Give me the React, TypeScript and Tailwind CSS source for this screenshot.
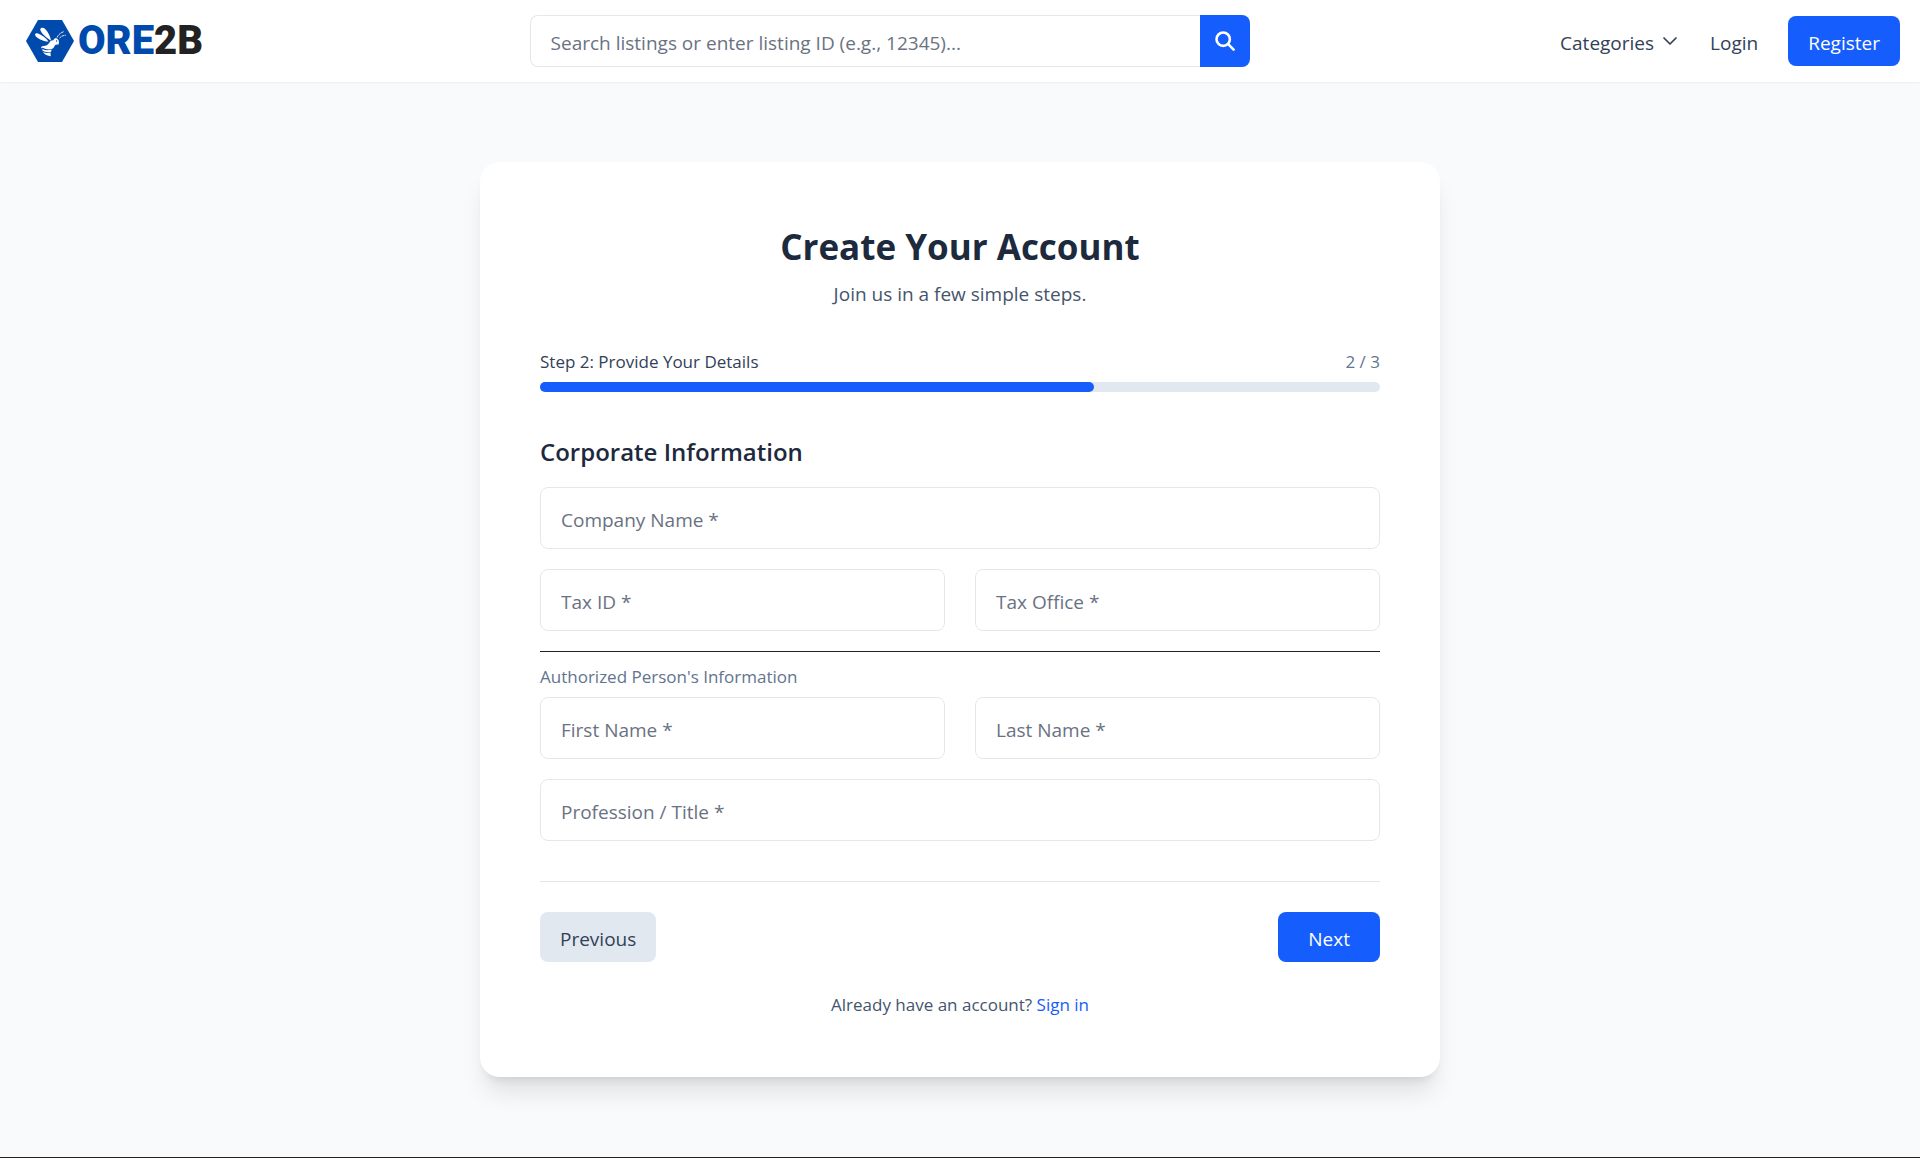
import { useState } from 'react';
import type { FormEvent } from 'react';

interface FieldProps {
  name: string;
  placeholder: string;
}

function Field({ name, placeholder }: FieldProps) {
  return (
    <input
      type="text"
      name={name}
      aria-label={placeholder}
      placeholder={placeholder}
      required
      className="block h-[62px] w-full min-w-0 rounded-lg border border-gray-200 bg-white px-5 pt-1 text-[19px] text-slate-800 placeholder:text-gray-500 focus:border-blue-600 focus:outline-none"
    />
  );
}

function Logo() {
  return (
    <a href="/" className="flex items-center gap-1 pr-4" aria-label="ORE2B">
      <svg className="h-[42px] w-12" viewBox="0 0 48 42">
        <path d="M12 0h24l12 21-12 21H12L0 21z" fill="#004aad" />
        {/* bee: wings, head with thorax, leg, striped abdomen */}
        <g fill="#fff">
          <path d="M25 20.500C20.500 18.500 14.500 12.500 14.300 9.600c-.1-2.200 3-2.400 4.600-.8 3.200 3.200 5.400 7.400 6.100 11.700z" />
          <path d="M22.500 21.600C17 21.400 10.500 18.300 9.200 15.200c-.7-1.800 1.200-2.400 2.900-1.700 4 1.600 8 4.600 10.400 8.100z" />
          <path d="M23.500 22.500c.8-1.800 2.400-2.500 4-2.300.4-1.600 2-2.200 3.400-1.600 2 .8 2.500 3.400 1.700 6-1.500-.4-2.700-.2-3.600.6-.6 1.600-1.300 2.800-2.800 3.500-2.600 1.100-6.600.9-8.900-.7-.9-.6-1.600-.3-2.100.7-.5-1.600.6-2.600 2.200-2.600 2.400 0 4.600-1.300 6.100-3.600z" />
          <path d="M16.300 28.900c2.900 1.500 6.400 1.700 9.300.6 0 .9-.2 1.600-.6 2.200-2.800.9-5.900.6-8.300-.6z" />
          <path d="M17 32.100c2.300.9 4.900 1.100 7.600.5-.1 1.200-.1 2.400.2 3.600-3.100-.2-6.300-1.500-7.800-4.100z" />
        </g>
        <circle cx="30.600" cy="21" r="0.700" fill="#004aad" />
        <path d="M31 17.500c1.100-2.600 3.700-5 7.200-6M33.500 18c1.500-1.700 3.600-2.700 6.300-2.800" fill="none" stroke="#fff" strokeWidth="0.9" strokeDasharray="2.600 0.600" />
      </svg>
      <span className="font-[Roboto,sans-serif] text-[40px] leading-none font-black text-[#004aad]">
        ORE<span className="text-[#222222]">2B</span>
      </span>
    </a>
  );
}

function Header() {
  return (
    <header className="flex h-[82px] items-center justify-between bg-white pr-5 pl-[26px] shadow-xs">
      <Logo />
      <form className="flex h-[52px] w-full max-w-[720px]" role="search" onSubmit={e => e.preventDefault()}>
        <input
          type="text"
          aria-label="Search listings"
          placeholder="Search listings or enter listing ID (e.g., 12345)..."
          className="min-w-0 flex-1 rounded-l-lg border border-r-0 border-gray-200 bg-white px-5 pt-1 text-[19px] text-slate-800 placeholder:text-gray-500 focus:outline-none"
        />
        <button type="submit" aria-label="Search" className="flex w-[50px] items-center justify-center rounded-r-lg bg-blue-600 text-white">
          <svg className="size-5" viewBox="0 0 20 20" fill="none" stroke="currentColor" strokeWidth="2.6" strokeLinecap="round">
            <circle cx="8.200" cy="8.200" r="6.700" />
            <path d="M13.200 13.200l5.400 5.400" />
          </svg>
        </button>
      </form>
      <nav className="flex items-center text-[19px] text-slate-700">
        <button type="button" className="flex items-center gap-2">
          <span className="pt-1">Categories</span>
          <svg className="size-4" viewBox="0 0 16 16" fill="none" stroke="currentColor" strokeWidth="1.700" strokeLinecap="round" strokeLinejoin="round">
            <path d="M2 5l6 6 6-6" />
          </svg>
        </button>
        <a href="/login" className="ml-8 pt-1">Login</a>
        <a href="/register" className="ml-[30px] flex h-[50px] items-center rounded-lg bg-blue-600 px-5 pt-1 text-white">Register</a>
      </nav>
    </header>
  );
}

export default function App() {
  const [step, setStep] = useState(2);
  const progress = Math.round((step / 3) * 99);

  const handleSubmit = (e: FormEvent) => {
    e.preventDefault();
    setStep(s => Math.min(3, s + 1));
  };

  return (
    <div className="flex min-h-screen flex-col bg-slate-50 font-['Open_Sans',sans-serif] text-slate-800">
      <Header />

      <main className="flex flex-1 items-start justify-center py-20">
        <div className="w-full max-w-[960px] rounded-[20px] bg-white p-[60px] shadow-xl">
          <div className="mb-[38px] pt-0.5 text-center">
            <h1 className="text-[35px] leading-[45px] font-bold">Create Your Account</h1>
            <p className="mt-2.5 text-[19px] leading-[30px] text-slate-600">Join us in a few simple steps.</p>
          </div>

          <div className="mb-10">
            <div className="mb-2 flex items-center justify-between pt-0.5 text-[17px] leading-[25px]">
              <span className="text-slate-700">Step 2: Provide Your Details</span>
              <span className="text-slate-500">{step} / 3</span>
            </div>
            <div className="h-2.5 rounded-full bg-slate-200">
              <div className="h-2.5 rounded-full bg-blue-600" style={{ width: `${progress}%` }} />
            </div>
          </div>

          <form onSubmit={handleSubmit}>
            <h2 className="mb-[18px] pt-0.5 text-[24px] leading-[35px] font-semibold">Corporate Information</h2>
            <div className="space-y-5">
              <Field name="company" placeholder="Company Name *" />
              <div className="grid grid-cols-2 gap-[30px]">
                <Field name="taxId" placeholder="Tax ID *" />
                <Field name="taxOffice" placeholder="Tax Office *" />
              </div>
            </div>

            <hr className="mt-5 border-[#222222]" />
            <p className="mt-2.5 mb-2 pt-0.5 text-[17px] leading-[25px] text-slate-500">Authorized Person's Information</p>

            <div className="space-y-5">
              <div className="grid grid-cols-2 gap-[30px]">
                <Field name="firstName" placeholder="First Name *" />
                <Field name="lastName" placeholder="Last Name *" />
              </div>
              <Field name="profession" placeholder="Profession / Title *" />
            </div>

            <div className="mt-10 flex justify-between border-t border-gray-200 pt-[30px] text-[19px]">
              <button type="button" onClick={() => setStep(s => Math.max(1, s - 1))} className="h-[50px] rounded-lg bg-slate-200 px-5 pt-1 text-slate-700">
                Previous
              </button>
              <button type="submit" className="h-[50px] rounded-lg bg-blue-600 px-[30px] pt-1 text-white">
                Next
              </button>
            </div>
          </form>

          <p className="mt-[30px] text-center text-[17px] leading-[25px] text-slate-600">
            Already have an account? <a href="/login" className="text-blue-600">Sign in</a>
          </p>
        </div>
      </main>

      <footer className="h-px bg-[#222222]" />
    </div>
  );
}
